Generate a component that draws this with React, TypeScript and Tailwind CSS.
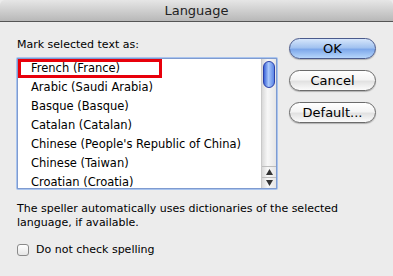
import React from 'react';

const languages = [
  'French (France)',
  'Arabic (Saudi Arabia)',
  'Basque (Basque)',
  'Catalan (Catalan)',
  "Chinese (People's Republic of China)",
  'Chinese (Taiwan)',
  'Croatian (Croatia)',
];

const AquaButton: React.FC<{ label: string; primary?: boolean }> = ({ label, primary }) => (
  <button
    className={`h-[21px] w-[87px] rounded-full border text-[13px] leading-none text-black shadow-[0_1px_1px_rgba(0,0,0,0.25)] ${
      primary
        ? 'border-[#4a5a8c] bg-[linear-gradient(to_bottom,#d6e6fb_0%,#a3c3f0_45%,#7ea8ea_55%,#b6d6fb_100%)]'
        : 'border-[#6b6b6b] bg-[linear-gradient(to_bottom,#ffffff_0%,#f4f4f4_45%,#e2e2e2_55%,#fbfbfb_100%)]'
    }`}
  >
    {label}
  </button>
);

const App: React.FC = () => {
  return (
    <div className="w-[393px] h-[276px] bg-[#ececec] flex flex-col font-['DejaVu_Sans',sans-serif] text-black overflow-hidden">
      {/* title bar */}
      <div className="h-[22px] shrink-0 rounded-t-[5px] border-b border-[#555] bg-[linear-gradient(to_bottom,#e6e6e6,#b8b8b8)] flex items-center justify-center">
        <span className="text-[13px] text-[#222]">Language</span>
      </div>

      <div className="flex px-[16px] pt-[16px]">
        {/* left column */}
        <div className="flex flex-col w-[262px]">
          <div className="text-[11px] leading-[14px] pl-[1px]">Mark selected text as:</div>

          <div className="mt-[5px] h-[133px] rounded-[2px] p-[1px] bg-[#a9c4ee] flex">
            <div className="flex-1 flex bg-white border border-[#7f9bd0] overflow-hidden">
              <div className="flex-1 flex flex-col overflow-hidden">
                {languages.map((l, i) =>
                  i === 0 ? (
                    <div
                      key={l}
                      className="h-[19px] w-[144px] shrink-0 flex items-center pl-[10px] border-[3px] border-[#e8000b] text-[11.5px] whitespace-nowrap"
                    >
                      {l}
                    </div>
                  ) : (
                    <div key={l} className="h-[19px] shrink-0 flex items-center pl-[13px] text-[11.5px] whitespace-nowrap">
                      {l}
                    </div>
                  )
                )}
              </div>
              {/* scrollbar */}
              <div className="w-[15px] shrink-0 flex flex-col border-l border-[#c9c9c9] bg-[linear-gradient(to_right,#d9d9d9,#f7f7f7_40%,#e6e6e6)]">
                <div className="mx-[1px] mt-[2px] h-[27px] rounded-full border border-[#2a3fa8] bg-[linear-gradient(to_right,#3b63d8,#a9c8fb_45%,#5b85e6)]" />
                <div className="flex-1" />
                <div className="h-[11px] flex items-center justify-center border-t border-[#bdbdbd]">
                  <svg width="7" height="6" viewBox="0 0 7 6"><path d="M3.5 0 L7 6 L0 6 Z" fill="#333" /></svg>
                </div>
                <div className="h-[11px] flex items-center justify-center border-t border-[#bdbdbd]">
                  <svg width="7" height="6" viewBox="0 0 7 6"><path d="M0 0 L7 0 L3.5 6 Z" fill="#333" /></svg>
                </div>
              </div>
            </div>
          </div>
        </div>

        {/* buttons */}
        <div className="ml-auto flex flex-col gap-[11px] mr-[1px]">
          <AquaButton label="OK" primary />
          <AquaButton label="Cancel" />
          <AquaButton label="Default..." />
        </div>
      </div>

      <div className="px-[17px] mt-[12px] text-[11px] leading-[14px]">
        The speller automatically uses dictionaries of the selected<br />language, if available.
      </div>

      <label className="px-[17px] mt-[12px] flex items-center gap-[7px] text-[11px]">
        <span className="w-[12px] h-[12px] rounded-[3px] border border-[#8a8a8a] bg-[linear-gradient(to_bottom,#ffffff,#e6e6e6)]" />
        Do not check spelling
      </label>
    </div>
  );
};

export default App;
